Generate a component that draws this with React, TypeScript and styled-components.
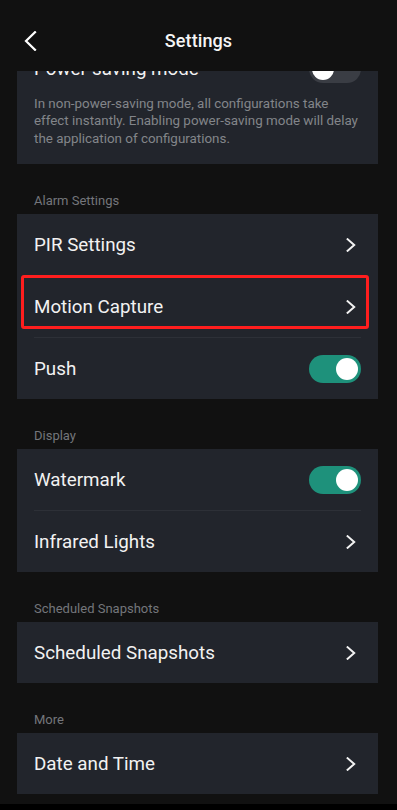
import React from "react";
import styled, { createGlobalStyle } from "styled-components";

const GlobalStyle = createGlobalStyle`
  html, body {
    margin: 0;
    padding: 0;
    background: #111111;
  }
  body {
    font-family: Roboto, "Noto Sans", "Liberation Sans", sans-serif;
    -webkit-font-smoothing: antialiased;
  }
  * { box-sizing: border-box; }
`;

const Screen = styled.div`
  width: 397px;
  height: 810px;
  display: flex;
  flex-direction: column;
  background: #111111;
  overflow: hidden;
`;

const Header = styled.header`
  flex: 0 0 71px;
  display: grid;
  grid-template-columns: 1fr auto 1fr;
  align-items: center;
  padding-top: 10px;
  background: #111111;
  position: relative;
  z-index: 2;
`;

const BackButton = styled.button`
  justify-self: start;
  margin-left: 22px;
  padding: 2px;
  border: 0;
  background: transparent;
  display: flex;
  align-items: center;
  cursor: pointer;
`;

const Title = styled.h1`
  margin: 0;
  font-size: 18px;
  font-weight: 500;
  color: #f5f5f5;
  letter-spacing: 0.1px;
`;

const Content = styled.main`
  flex: 1;
  overflow: hidden;
  padding: 0 19px 0 17px;
`;

const Card = styled.section<{ $scrolled?: boolean }>`
  background: #22252c;
  margin-top: ${(p) => (p.$scrolled ? "-28px" : "0")};
`;

const SectionLabel = styled.div`
  padding: 28px 17px 4px;
  font-size: 13px;
  line-height: 18px;
  color: #74767b;
`;

const Row = styled.div<{ $compact?: boolean }>`
  position: relative;
  height: ${(p) => (p.$compact ? "52px" : "61px")};
  margin: 0 17px;
  display: flex;
  align-items: center;
  justify-content: space-between;
  font-size: 18.8px;
  color: #f2f2f2;
  & + & {
    border-top: 1px solid #2d3037;
    height: ${(p) => (p.$compact ? "53px" : "62px")};
  }
`;

const Description = styled.p`
  margin: 0;
  padding: 0 17px 17px;
  font-size: 13.4px;
  line-height: 17.4px;
  color: #83858a;
`;

const Highlight = styled.div`
  position: absolute;
  top: -1px;
  left: -13px;
  right: -8px;
  height: 54px;
  border: 3px solid #ff1e1e;
  border-radius: 3px;
  pointer-events: none;
`;

const SwitchTrack = styled.div<{ $on: boolean }>`
  width: 52px;
  height: 28px;
  border-radius: 14px;
  background: ${(p) => (p.$on ? "#1e917b" : "#3a3d44")};
  display: flex;
  align-items: center;
  justify-content: ${(p) => (p.$on ? "flex-end" : "flex-start")};
  padding: 0 3px;
  flex-shrink: 0;
`;

const SwitchKnob = styled.div`
  width: 22px;
  height: 22px;
  border-radius: 50%;
  background: #ffffff;
`;

const NavStrip = styled.div`
  flex: 0 0 6px;
  background: #000000;
`;

const Chevron = () => (
  <svg width="10" height="14" viewBox="0 0 10 14" style={{ marginRight: 5 }}>
    <path d="M1.6 1.2 L8.2 7 L1.6 12.8" fill="none" stroke="#f2f2f2" strokeWidth="2" strokeLinecap="square" />
  </svg>
);

const BackIcon = () => (
  <svg width="13" height="20" viewBox="0 0 13 20">
    <path d="M11 1.2 L2 10 L11 18.8" fill="none" stroke="#ffffff" strokeWidth="2.2" strokeLinecap="square" />
  </svg>
);

const Switch = ({ on }: { on: boolean }) => (
  <SwitchTrack $on={on}>
    <SwitchKnob />
  </SwitchTrack>
);

export default function App() {
  return (
    <>
      <GlobalStyle />
      <Screen>
        <Header>
          <BackButton aria-label="Back">
            <BackIcon />
          </BackButton>
          <Title>Settings</Title>
          <div />
        </Header>
        <Content>
          <Card $scrolled>
            <Row $compact>
              <span>Power-saving mode</span>
              <Switch on={false} />
            </Row>
            <Description>
              In non-power-saving mode, all configurations take effect instantly. Enabling power-saving mode will delay the application of configurations.
            </Description>
          </Card>

          <SectionLabel>Alarm Settings</SectionLabel>
          <Card>
            <Row>
              <span>PIR Settings</span>
              <Chevron />
            </Row>
            <Row>
              <span>Motion Capture</span>
              <Chevron />
              <Highlight />
            </Row>
            <Row>
              <span>Push</span>
              <Switch on />
            </Row>
          </Card>

          <SectionLabel>Display</SectionLabel>
          <Card>
            <Row>
              <span>Watermark</span>
              <Switch on />
            </Row>
            <Row>
              <span>Infrared Lights</span>
              <Chevron />
            </Row>
          </Card>

          <SectionLabel>Scheduled Snapshots</SectionLabel>
          <Card>
            <Row>
              <span>Scheduled Snapshots</span>
              <Chevron />
            </Row>
          </Card>

          <SectionLabel>More</SectionLabel>
          <Card>
            <Row>
              <span>Date and Time</span>
              <Chevron />
            </Row>
          </Card>
        </Content>
        <NavStrip />
      </Screen>
    </>
  );
}
